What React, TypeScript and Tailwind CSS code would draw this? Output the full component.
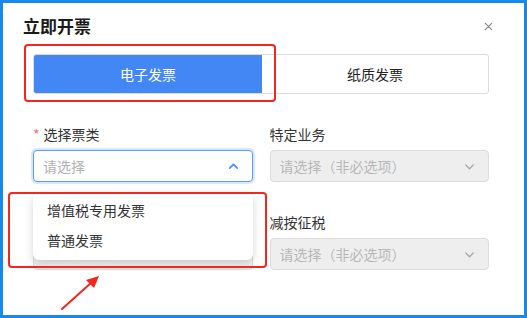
import React from "react";

const font = { fontFamily: '"Noto Sans CJK SC", "Noto Sans", sans-serif' };

function ChevronDown({ className }: { className?: string }) {
  return (
    <svg viewBox="0 0 12 12" className={className} fill="none" stroke="currentColor" strokeWidth="1.3" strokeLinecap="round" strokeLinejoin="round">
      <path d="M2.5 4.5 6 8l3.5-3.5" />
    </svg>
  );
}
function ChevronUp({ className }: { className?: string }) {
  return (
    <svg viewBox="0 0 12 12" className={className} fill="none" stroke="currentColor" strokeWidth="1.6" strokeLinecap="round" strokeLinejoin="round">
      <path d="M2.5 7.5 6 4l3.5 3.5" />
    </svg>
  );
}

function DisabledSelect({ text = true }: { text?: boolean }) {
  return (
    <div className="h-[32px] rounded-[4px] border border-[#dcdcdc] bg-[#eeeeee] flex items-center justify-between pl-[9px] pr-[12px]">
      <span className="text-[14px] text-[#b8b8b8] leading-none">{text ? "请选择（非必选项）" : ""}</span>
      <ChevronDown className="w-[13px] h-[13px] text-[#a8a8a8]" />
    </div>
  );
}

export default function App() {
  return (
    <div style={font} className="relative w-[527px] h-[318px] border-[3px] border-[#1788ee] bg-white overflow-hidden">
      <div className="flex items-center justify-between pl-[20px] pr-[31px] pt-[11px] h-[35px]">
        <span className="text-[17px] font-bold text-[#1a1a1a] leading-[24px]">立即开票</span>
        <svg viewBox="0 0 10 10" className="w-[9px] h-[9px] text-[#8a8a8a]" stroke="currentColor" strokeWidth="1.4" strokeLinecap="round">
          <path d="M1.5 1.5l7 7M8.5 1.5l-7 7" />
        </svg>
      </div>
      <div className="pl-[30px] pr-[35px] pt-[16px]">
        <div className="flex h-[40px] rounded-[3px] border border-[#dcdcdc] overflow-hidden">
          <div className="w-[228px] bg-[#4387f5] flex items-center justify-center text-white text-[14px]">电子发票</div>
          <div className="flex-1 flex items-center justify-center text-[#222] text-[14px]">纸质发票</div>
        </div>
        <div className="relative grid grid-cols-2 gap-x-[17px] mt-[30px]">
          <div>
            <div className="h-[20px] flex items-center text-[14px] text-[#333] mb-[6px]">
              <span className="text-[#f56c6c] mr-[4px]">*</span>选择票类
            </div>
            <div className="h-[32px] rounded-[4px] border border-[#5b9cf8] ring-2 ring-[#d7e7ff] flex items-center justify-between pl-[9px] pr-[12px] bg-white">
              <span className="text-[14px] text-[#b0b0b0] leading-none">请选择</span>
              <ChevronUp className="w-[13px] h-[13px] text-[#4d8ff5]" />
            </div>
          </div>
          <div>
            <div className="h-[20px] flex items-center text-[14px] text-[#333] mb-[6px]">特定业务</div>
            <DisabledSelect />
          </div>
          <div className="mt-[30px]">
            <div className="h-[20px] mb-[6px]" />
            <DisabledSelect text={false} />
          </div>
          <div className="mt-[30px]">
            <div className="h-[20px] flex items-center text-[14px] text-[#333] mb-[6px]">减按征税</div>
            <DisabledSelect />
          </div>
          <div className="absolute left-0 top-[69px] w-[220px] h-[67px] bg-white rounded-[6px] shadow-[0_3px_10px_rgba(0,0,0,0.16)] pt-[2px]">
            <div className="h-[30px] flex items-center pl-[14px] text-[14px] text-[#333]">增值税专用发票</div>
            <div className="h-[30px] flex items-center pl-[14px] text-[14px] text-[#333]">普通发票</div>
          </div>
        </div>
      </div>
      <div className="absolute left-[21px] top-[41px] w-[252px] h-[58px] border-[2.5px] border-[#f5261e] rounded-[4px]" />
      <div className="absolute left-[5px] top-[189px] w-[259px] h-[76px] border-[2.5px] border-[#f5261e] rounded-[4px]" />
      <svg className="absolute left-0 top-0" width="527" height="318" viewBox="-3 -3 527 318">
        <line x1="56" y1="303" x2="86" y2="276" stroke="#f5261e" strokeWidth="2" strokeLinecap="round" />
        <path d="M93 270 L80 274 L88 282 Z" fill="#f5261e" />
      </svg>
    </div>
  );
}
